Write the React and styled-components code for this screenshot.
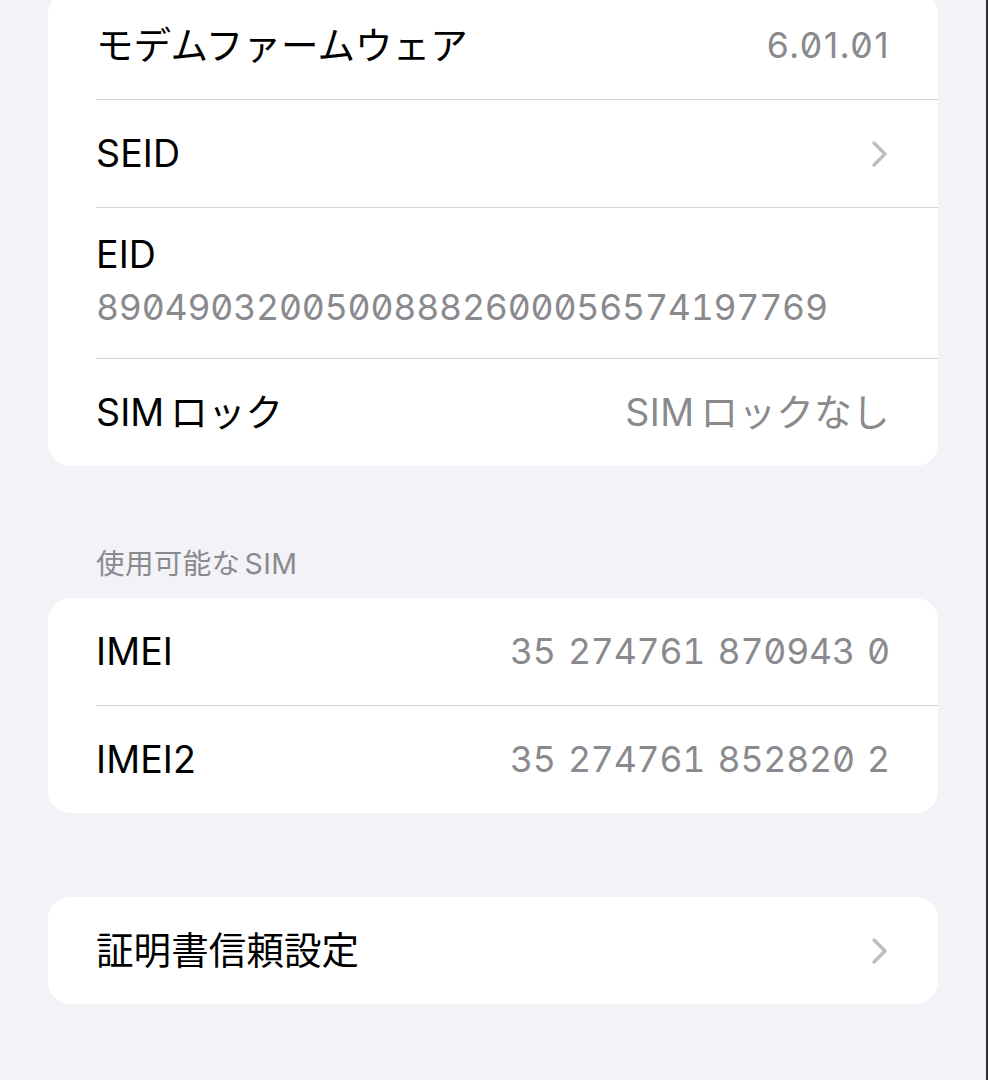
import React from "react";
import styled, { createGlobalStyle } from "styled-components";

const GlobalStyle = createGlobalStyle`
  html, body {
    margin: 0;
    padding: 0;
    background: #f2f2f7;
  }
  body {
    font-family: Inter, "Noto Sans CJK JP", "Noto Sans", sans-serif;
    -webkit-font-smoothing: antialiased;
  }
`;

const Page = styled.div`
  box-sizing: border-box;
  width: 988px;
  height: 1080px;
  overflow: hidden;
  background: #f2f2f7;
  border-right: 2px solid #2e2e30;
  display: flex;
  flex-direction: column;
  padding: 0 48px;
`;

const Card = styled.div`
  background: #ffffff;
  border-radius: 22px;
  overflow: hidden;
  margin-top: ${(p) => p.$mt || 0}px;
  display: flex;
  flex-direction: column;
`;

const SectionHeader = styled.div`
  margin-top: 81px;
  margin-bottom: 17px;
  padding-left: 48px;
  font-size: 28.5px;
  line-height: 34px;
  color: #8a8a8e;
  letter-spacing: 0.4px;
`;

const Row = styled.div`
  padding-left: 48px;
  display: flex;
`;

const RowInner = styled.div`
  flex: 1;
  box-sizing: border-box;
  min-height: ${(p) => (p.$last ? 107 : 108)}px;
  padding-right: 48px;
  display: flex;
  align-items: center;
  justify-content: space-between;
  border-bottom: ${(p) => (p.$last ? "none" : "1px solid #d1d1d6")};
`;

const StackInner = styled.div`
  flex: 1;
  box-sizing: border-box;
  padding: 24px 48px 27px 0;
  display: flex;
  flex-direction: column;
  border-bottom: ${(p) => (p.$last ? "none" : "1px solid #d1d1d6")};
`;

const Label = styled.span`
  font-size: 37.5px;
  line-height: 46px;
  color: #000000;
  letter-spacing: 0.1px;
  white-space: nowrap;
`;

const Value = styled.span`
  font-size: ${(p) => (p.$num ? 35.6 : 37.5)}px;
  line-height: 46px;
  color: #8a8a8e;
  font-feature-settings: ${(p) =>
    p.$num ? (p.$prop ? '"zero" 1' : '"tnum" 1, "zero" 1') : "normal"};
  letter-spacing: ${(p) => (p.$prop ? "1.4px" : p.$num ? "-0.2px" : "0.4px")};
  word-spacing: ${(p) => (p.$num ? "3px" : "0")};
  margin-top: ${(p) => p.$mt || 0}px;
  white-space: nowrap;
`;

const LatinGap = styled.span`
  margin-right: ${(p) => p.$w || 6}px;
`;

const ChevronWrap = styled.span`
  display: flex;
  align-items: center;
  margin-right: 2px;
`;

const Chevron = () => (
  <ChevronWrap>
    <svg width="17" height="28" viewBox="0 0 17 28" fill="none">
      <polyline
        points="3,3 14,14 3,25"
        stroke="#bdbdc2"
        strokeWidth="3.4"
        strokeLinecap="round"
        strokeLinejoin="round"
      />
    </svg>
  </ChevronWrap>
);

const SimpleRow = ({ label, value, num, prop, chevron, last }) => (
  <Row>
    <RowInner $last={last}>
      <Label>{label}</Label>
      {value && (
        <Value $num={num} $prop={prop}>
          {value}
        </Value>
      )}
      {chevron && <Chevron />}
    </RowInner>
  </Row>
);

export default function App() {
  return (
    <>
      <GlobalStyle />
      <Page>
        <Card $mt={-8}>
          <SimpleRow label="モデムファームウェア" value="6.01.01" num prop />
          <SimpleRow label="SEID" chevron />
          <Row>
            <StackInner>
              <Label>EID</Label>
              <Value $num $mt={7}>
                89049032005008882600056574197769
              </Value>
            </StackInner>
          </Row>
          <SimpleRow
            label={
              <>
                <LatinGap $w={6}>SIM</LatinGap>ロック
              </>
            }
            value={
              <>
                <LatinGap $w={6}>SIM</LatinGap>ロックなし
              </>
            }
            last
          />
        </Card>

        <SectionHeader>
          <LatinGap $w={4}>使用可能な</LatinGap>SIM
        </SectionHeader>
        <Card>
          <SimpleRow label="IMEI" value="35 274761 870943 0" num />
          <SimpleRow label="IMEI2" value="35 274761 852820 2" num last />
        </Card>

        <Card $mt={84}>
          <SimpleRow label="証明書信頼設定" chevron last />
        </Card>
      </Page>
    </>
  );
}
